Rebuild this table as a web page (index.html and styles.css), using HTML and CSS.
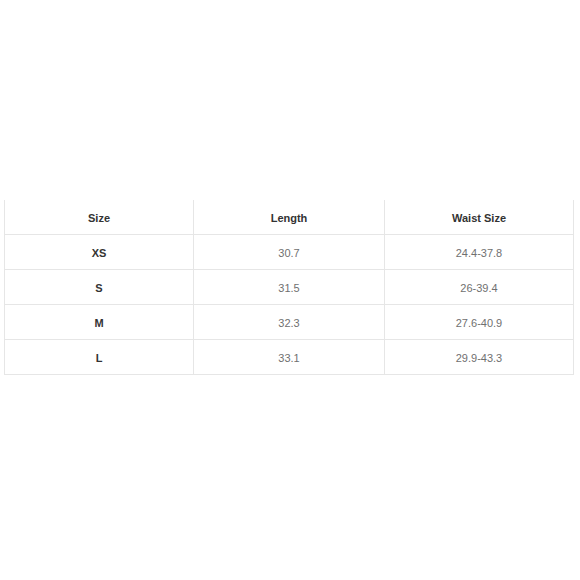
FILE: index.html
```html
<!DOCTYPE html>
<html>
<head>
<meta charset="utf-8">
<link rel="stylesheet" href="styles.css">
</head>
<body>
<div class="wrap">
<table class="sizes">
<tr class="head"><th>Size</th><th>Length</th><th>Waist Size</th></tr>
<tr><td class="sz">XS</td><td>30.7</td><td>24.4-37.8</td></tr>
<tr><td class="sz">S</td><td>31.5</td><td>26-39.4</td></tr>
<tr><td class="sz">M</td><td>32.3</td><td>27.6-40.9</td></tr>
<tr><td class="sz">L</td><td>33.1</td><td>29.9-43.3</td></tr>
</table>
</div>
</body>
</html>
```
FILE: styles.css
```css
html, body { margin: 0; padding: 0; background: #fff; }
.wrap { width: 580px; height: 580px; padding-top: 200px; padding-left: 4px; box-sizing: border-box; }
.sizes {
  border-collapse: collapse;
  width: 570px;
  table-layout: fixed;
  font-family: "Liberation Sans", Arial, sans-serif;
  font-size: 11px;
}
.sizes th, .sizes td {
  height: 32px;
  padding: 2px 0 0 0;
  text-align: center;
  border-left: 1px solid #e6e6e6;
  border-right: 1px solid #e6e6e6;
  border-bottom: 1px solid #e6e6e6;
}
.sizes th { font-weight: bold; color: #333; }
.sizes td { color: #707070; }
.sizes td.sz { font-weight: bold; color: #333; }
.sizes th:nth-child(1) { width: 188px; }
.sizes th:nth-child(2) { width: 190px; }
```
